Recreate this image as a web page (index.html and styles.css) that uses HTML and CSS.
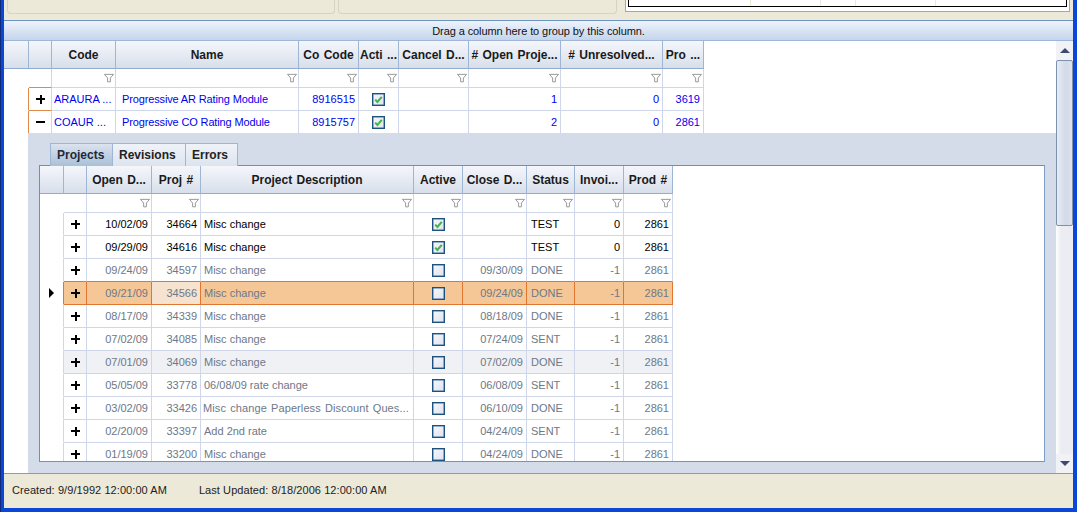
FILE: index.html
```html
<!DOCTYPE html>
<html lang="en">
<head>
<meta charset="utf-8">
<title>Rating Modules</title>
<link rel="stylesheet" href="styles.css">
</head>
<body>
<svg class="defs" width="0" height="0" aria-hidden="true">
  <symbol id="funnel" viewBox="0 0 11 11"><path d="M.5 1.5h10L7 5.5v4.2H4V5.5z" fill="#fff" stroke="#8f8f8f"/></symbol>
  <symbol id="tick" viewBox="0 0 9 9"><path d="M1.2 4.6 3.4 7 7.8 1.8" fill="none" stroke="#3fb54a" stroke-width="2"/></symbol>
</svg>
<div class="window">
  <div class="top">
    <div class="groupbox box-a"></div>
    <div class="groupbox box-b"></div>
    <div class="panel"><div class="panel-inner"><i></i><i></i><i></i><i></i></div></div>
  </div>
  <div class="dragbar">Drag a column here to group by this column.</div>
  <div class="gridarea">
    <div class="gridbody">
      <table class="grid main">
        <colgroup><col class="w25"><col class="w23"><col class="w64"><col class="w183"><col class="w60"><col class="w40"><col class="w70"><col class="w92"><col class="w102"><col class="w41"></colgroup>
        <thead>
          <tr class="head"><th></th><th></th><th>Code</th><th>Name</th><th>Co Code</th><th>Acti ...</th><th>Cancel D...</th><th># Open Proje...</th><th># Unresolved...</th><th>Pro ...</th></tr>
          <tr class="filter"><td class="blank"></td><td class="blank"></td>
            <td><svg><use href="#funnel"/></svg></td><td><svg><use href="#funnel"/></svg></td><td><svg><use href="#funnel"/></svg></td><td><svg><use href="#funnel"/></svg></td><td><svg><use href="#funnel"/></svg></td><td><svg><use href="#funnel"/></svg></td><td><svg><use href="#funnel"/></svg></td><td><svg><use href="#funnel"/></svg></td></tr>
        </thead>
        <tbody>
          <tr class="link"><td class="blank"></td><td class="exp-cell mark"><span class="plus"></span></td><td>ARAURA ...</td><td class="name">Progressive AR Rating Module</td><td class="r">8916515</td><td class="c"><span class="check on"><svg><use href="#tick"/></svg></span></td><td></td><td class="r">1</td><td class="r">0</td><td class="r">3619</td></tr>
          <tr class="link"><td class="blank"></td><td class="exp-cell"><span class="minus"></span></td><td>COAUR ...</td><td class="name">Progressive CO Rating Module</td><td class="r">8915757</td><td class="c"><span class="check on"><svg><use href="#tick"/></svg></span></td><td></td><td class="r">2</td><td class="r">0</td><td class="r">2861</td></tr>
        </tbody>
      </table>
      <div class="detail">
        <div class="tabs"><span class="tab active">Projects</span><span class="tab">Revisions</span><span class="tab">Errors</span></div>
        <div class="subgrid">
          <table class="grid sub">
            <colgroup><col class="w24"><col class="w23"><col class="w65"><col class="w49"><col class="w213"><col class="w49"><col class="w64"><col class="w48"><col class="w49"><col class="w49"></colgroup>
            <thead>
              <tr class="head"><th></th><th></th><th>Open D...</th><th>Proj #</th><th>Project Description</th><th>Active</th><th>Close D...</th><th>Status</th><th>Invoi...</th><th>Prod #</th></tr>
              <tr class="filter"><td class="blank"></td><td class="blank"></td>
                <td><svg><use href="#funnel"/></svg></td><td><svg><use href="#funnel"/></svg></td><td><svg><use href="#funnel"/></svg></td><td><svg><use href="#funnel"/></svg></td><td><svg><use href="#funnel"/></svg></td><td><svg><use href="#funnel"/></svg></td><td><svg><use href="#funnel"/></svg></td><td><svg><use href="#funnel"/></svg></td></tr>
            </thead>
            <tbody>
              <tr><td class="blank"></td><td class="exp-cell"><span class="plus"></span></td><td class="r">10/02/09</td><td class="r">34664</td><td>Misc change</td><td class="c"><span class="check on"><svg><use href="#tick"/></svg></span></td><td></td><td>TEST</td><td class="r">0</td><td class="r">2861</td></tr>
              <tr><td class="blank"></td><td class="exp-cell"><span class="plus"></span></td><td class="r">09/29/09</td><td class="r">34616</td><td>Misc change</td><td class="c"><span class="check on"><svg><use href="#tick"/></svg></span></td><td></td><td>TEST</td><td class="r">0</td><td class="r">2861</td></tr>
              <tr class="closed before-sel"><td class="blank"></td><td class="exp-cell"><span class="plus"></span></td><td class="r">09/24/09</td><td class="r">34597</td><td>Misc change</td><td class="c"><span class="check"></span></td><td class="r">09/30/09</td><td>DONE</td><td class="r">-1</td><td class="r">2861</td></tr>
              <tr class="closed selected"><td class="blank"><span class="pointer"></span></td><td class="exp-cell"><span class="plus"></span></td><td class="r">09/21/09</td><td class="r current">34566</td><td>Misc change</td><td class="c"><span class="check"></span></td><td class="r">09/24/09</td><td>DONE</td><td class="r">-1</td><td class="r">2861</td></tr>
              <tr class="closed"><td class="blank"></td><td class="exp-cell"><span class="plus"></span></td><td class="r">08/17/09</td><td class="r">34339</td><td>Misc change</td><td class="c"><span class="check"></span></td><td class="r">08/18/09</td><td>DONE</td><td class="r">-1</td><td class="r">2861</td></tr>
              <tr class="closed"><td class="blank"></td><td class="exp-cell"><span class="plus"></span></td><td class="r">07/02/09</td><td class="r">34085</td><td>Misc change</td><td class="c"><span class="check"></span></td><td class="r">07/24/09</td><td>SENT</td><td class="r">-1</td><td class="r">2861</td></tr>
              <tr class="closed alt"><td class="blank"></td><td class="exp-cell"><span class="plus"></span></td><td class="r">07/01/09</td><td class="r">34069</td><td>Misc change</td><td class="c"><span class="check"></span></td><td class="r">07/02/09</td><td>DONE</td><td class="r">-1</td><td class="r">2861</td></tr>
              <tr class="closed"><td class="blank"></td><td class="exp-cell"><span class="plus"></span></td><td class="r">05/05/09</td><td class="r">33778</td><td>06/08/09 rate change</td><td class="c"><span class="check"></span></td><td class="r">06/08/09</td><td>SENT</td><td class="r">-1</td><td class="r">2861</td></tr>
              <tr class="closed"><td class="blank"></td><td class="exp-cell"><span class="plus"></span></td><td class="r">03/02/09</td><td class="r">33426</td><td class="long">Misc change Paperless Discount Ques...</td><td class="c"><span class="check"></span></td><td class="r">06/10/09</td><td>DONE</td><td class="r">-1</td><td class="r">2861</td></tr>
              <tr class="closed"><td class="blank"></td><td class="exp-cell"><span class="plus"></span></td><td class="r">02/20/09</td><td class="r">33397</td><td>Add 2nd rate</td><td class="c"><span class="check"></span></td><td class="r">04/24/09</td><td>SENT</td><td class="r">-1</td><td class="r">2861</td></tr>
              <tr class="closed"><td class="blank"></td><td class="exp-cell"><span class="plus"></span></td><td class="r">01/19/09</td><td class="r">33200</td><td>Misc change</td><td class="c"><span class="check"></span></td><td class="r">04/24/09</td><td>DONE</td><td class="r">-1</td><td class="r">2861</td></tr>
            </tbody>
          </table>
        </div>
      </div>
    </div>
    <div class="scrollbar">
      <div class="arrow"><span class="up"></span></div>
      <div class="thumb"></div>
      <div class="track"></div>
      <div class="arrow"><span class="down"></span></div>
    </div>
  </div>
  <div class="status"><span>Created: 9/9/1992 12:00:00 AM</span><span>Last Updated: 8/18/2006 12:00:00 AM</span></div>
</div>
</body>
</html>
```
FILE: styles.css
```css
* { box-sizing: border-box; }
html, body { margin: 0; padding: 0; background: #fff; overflow: hidden; }
body { font-family: "Liberation Sans", Arial, sans-serif; font-size: 11px; color: #000; }
.defs { position: absolute; }

.window {
  width: 1076px; height: 512px; margin-left: 1px;
  display: flex; flex-direction: column;
  border-left: 3px solid #0a46d8; border-right: 4px solid #0a46d8; border-bottom: 4px solid #0a46d8;
  background: #ece9d8;
  box-shadow: -1px 0 0 #0f2a78, 0 1px 0 #0f2a78;
}

.top { height: 20px; display: flex; padding: 0 3px; flex: none; }
.groupbox { height: 14px; border: 1px solid #d6d3bf; border-top: 0; border-radius: 0 0 4px 4px; }
.box-a { width: 328px; margin-right: 3px; }
.box-b { width: 279px; margin-right: 8px; }
.panel { width: 445px; height: 12px; background: #fff; border: 1px solid #aca899; border-top: 0; padding: 0 2px 4px 2px; }
.panel-inner { height: 100%; border: 1px solid #000; border-top: 0; display: grid; grid-template-columns: 122px 70px 35px 80px; }
.panel-inner i { border-right: 1px solid #ece9d8; }

.dragbar {
  height: 21px; flex: none;
  border-top: 1px solid #6d93c4; border-bottom: 1px solid #9fb6d6;
  background: linear-gradient(#eef3fb, #c4d5ec);
  text-align: center; line-height: 20px; letter-spacing: -.09px; color: #111;
}

.gridarea { flex: 1; min-height: 0; display: flex; background: #fff; }
.gridbody { width: 1052px; flex: none; overflow: hidden; display: flex; flex-direction: column; }

.grid { border-collapse: separate; border-spacing: 0; table-layout: fixed; flex: none; }
.main { width: 700px; }
.sub { width: 633px; }
.w23 { width: 23px; } .w24 { width: 24px; } .w25 { width: 25px; } .w40 { width: 40px; } .w41 { width: 41px; }
.w48 { width: 48px; } .w49 { width: 49px; } .w60 { width: 60px; } .w64 { width: 64px; }
.w65 { width: 65px; } .w70 { width: 70px; } .w92 { width: 92px; } .w102 { width: 102px; }
.w183 { width: 183px; } .w213 { width: 213px; }

.grid th {
  height: 28px; padding: 0 1px; overflow: hidden; white-space: nowrap;
  font-size: 12px; font-weight: bold; color: #1a1a1a; word-spacing: 1px; text-align: center;
  background: linear-gradient(#f4f6fb, #d8dfeb);
  border-right: 1px solid #9db6d6; border-bottom: 1px solid #8fadd0;
}
.grid td {
  height: 23px; padding: 0 3px; overflow: hidden; white-space: nowrap;
  border-right: 1px solid #cfd6ea; border-bottom: 1px solid #cfd6ea;
}
.grid .filter td { height: 19px; padding: 0 1px 0 0; text-align: right; line-height: 0; }
.filter svg { width: 10px; height: 10px; vertical-align: middle; }
.grid td.blank { border-right-color: transparent; border-bottom-color: transparent; background: #fff; padding: 0; position: relative; overflow: visible; }
.grid .filter td.blank + td.blank { border-right-color: #cfd6ea; border-bottom-color: #cfd6ea; }
.grid td.r { text-align: right; }
.grid td.c { text-align: center; padding: 0; }
.grid td.exp-cell { padding: 0; }

.main tbody td { padding-left: 2px; color: #0000f0; }
.main tbody td.name { padding-left: 6px; letter-spacing: -.14px; }
.main tbody td.blank { border-right-color: #e08a4a; }
.main .filter td.blank + td.blank { border-bottom-color: #e08a4a; }
.main tbody td.mark { border-bottom-color: #e08a4a; }
.main tbody tr:last-child td { height: 22px; border-bottom: 0; }

.plus, .minus { display: block; width: 9px; height: 9px; margin-left: 7px; background-repeat: no-repeat; }
.plus { background-image: linear-gradient(#000, #000), linear-gradient(#000, #000); background-size: 9px 2px, 2px 9px; background-position: 0 3.5px, 3.5px 0; }
.minus { background-image: linear-gradient(#000, #000); background-size: 9px 2px; background-position: 0 3.5px; }

.check { display: inline-block; width: 13px; height: 13px; border: 1px solid #1c5180; background: linear-gradient(135deg, #f6f7fa, #dfe3ee); box-shadow: inset 0 0 0 .5px #3a6ea5; vertical-align: middle; }
.check svg { display: block; width: 9px; height: 9px; margin: 1px; }

.detail { flex: 1; min-height: 0; margin-left: 24px; background: #d5dce9; padding: 10px 0 0 11px; }
.tabs { display: grid; grid-template-columns: 63px 73px 52px; height: 22px; margin-left: 11px; }
.tab {
  padding-left: 6px; font-size: 12px; font-weight: bold; line-height: 22px; color: #222;
  background: linear-gradient(#eff3f9, #dde4ef);
  border: 1px solid #9db6d6; border-bottom: 0; border-left: 0;
}
.tab:first-child { border-left: 1px solid #9db6d6; }
.tab.active { background: linear-gradient(#dbe3ee, #a9c0d8); color: #1d2a38; }
.subgrid { width: 1006px; height: 297px; background: #fff; border: 1px solid #6f8fb8; border-right-color: #7f9cc2; border-bottom-color: #7b93ad; overflow: hidden; }
.sub tbody td:nth-child(8) { padding-left: 4px; }
.sub tbody td.long { padding-left: 2px; letter-spacing: .1px; word-spacing: 1px; }
.sub tbody td.blank { border-right-color: #cfd6ea; }
.sub tbody tr.closed td { color: #6d7889; }
.sub tr.alt td:not(.blank) { background: #eff1f4; }
.sub tr.before-sel td:not(.blank) { border-bottom-color: #e0762f; }
.sub tr.selected td:not(.blank) { background: #f5c797; border-right-color: #e0762f; border-bottom-color: #e0762f; }
.sub tbody tr.selected td.blank { border-right-color: #e0762f; }
.sub tr.selected td.current { background: #f5e2cf; }
.pointer { position: absolute; left: 9px; top: 6px; border-left: 5px solid #000; border-top: 5px solid transparent; border-bottom: 5px solid transparent; }

.scrollbar { width: 17px; flex: none; display: flex; flex-direction: column; background: #f0f1f4; }
.arrow { height: 19px; flex: none; display: flex; align-items: center; justify-content: center; background: #f1f2f5; }
.up { border: 5px solid transparent; border-top: 0; border-bottom: 5px solid #3f4a72; }
.down { border: 5px solid transparent; border-bottom: 0; border-top: 5px solid #3f4a72; }
.thumb { height: 166px; flex: none; border: 1px solid #7d90ae; border-radius: 2px; background: linear-gradient(90deg, #e8ebf1, #d2dae8 60%, #dfe3ec); }
.track { flex: 1; background: linear-gradient(90deg, #fff, #ecedf2 30%); }

.status {
  height: 35px; flex: none; display: flex; align-items: center; gap: 32px; padding: 0 0 2px 8px;
  border-top: 1px solid #8a9bb5; background: #ece9d8; color: #222; font-size: 11px; letter-spacing: .07px;
}
```
